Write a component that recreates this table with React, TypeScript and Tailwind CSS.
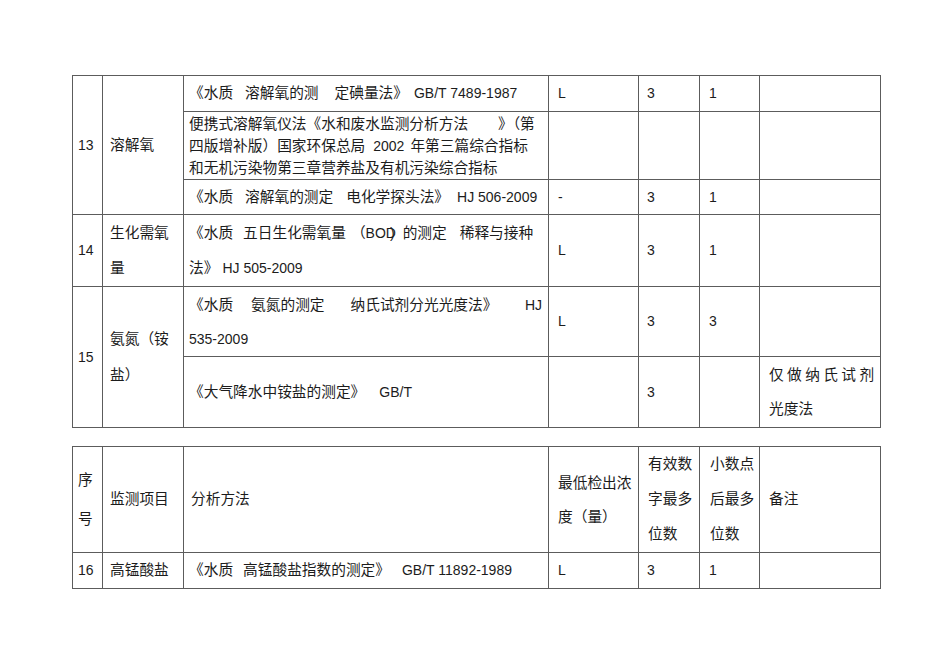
const cell = "border border-[#5c5c5c] align-middle p-0";

function Cols() {
  return (
    <colgroup>
      <col className="w-[30px]" />
      <col className="w-[81px]" />
      <col className="w-[365px]" />
      <col className="w-[90px]" />
      <col className="w-[61px]" />
      <col className="w-[60px]" />
      <col className="w-[121px]" />
    </colgroup>
  );
}

export default function App() {
  return (
    <div className="min-h-[672px] w-[950px] bg-white pl-[72px] pt-[75px] text-[14.7px] text-[#1c1c1c] font-['Liberation_Sans','Noto_Sans_CJK_SC',sans-serif]">
      <table className="table-fixed border-collapse w-[809px]">
        <Cols />
        <tbody>
          <tr className="h-[36px]">
            <td rowSpan={3} className={`${cell} pl-[5px] text-[14px]`}>13</td>
            <td rowSpan={3} className={`${cell} pl-[7px]`}>溶解氧</td>
            <td className={`${cell} pl-[5px] whitespace-nowrap`}>
              《水质<span className="ml-[12px]">溶解氧的测</span>
              <span className="ml-[16px]">定碘量法》</span>
              <span className="ml-[6px] text-[14px]">GB/T 7489-1987</span>
            </td>
            <td className={`${cell} pl-[9px] text-[14px]`}>L</td>
            <td className={`${cell} pl-[8px] text-[14px]`}>3</td>
            <td className={`${cell} pl-[9px] text-[14px]`}>1</td>
            <td className={cell}></td>
          </tr>
          <tr className="h-[68px]">
            <td className={`${cell} pl-[5px] leading-[22px] whitespace-nowrap`}>
              <div>
                便携式溶解氧仪法《水和废水监测分析方法<span className="ml-[30px]">》（第</span>
              </div>
              <div>
                四版增补版）国家环保总局<span className="ml-[8px] text-[14px]">2002</span>
                <span className="ml-[6px]">年第三篇综合指标</span>
              </div>
              <div>和无机污染物第三章营养盐及有机污染综合指标</div>
            </td>
            <td className={cell}></td>
            <td className={cell}></td>
            <td className={cell}></td>
            <td className={cell}></td>
          </tr>
          <tr className="h-[35px]">
            <td className={`${cell} pl-[5px] whitespace-nowrap`}>
              《水质<span className="ml-[12px]">溶解氧的测定</span>
              <span className="ml-[13px]">电化学探头法》</span>
              <span className="ml-[8px] text-[14px]">HJ 506-2009</span>
            </td>
            <td className={`${cell} pl-[9px] text-[14px]`}>-</td>
            <td className={`${cell} pl-[8px] text-[14px]`}>3</td>
            <td className={`${cell} pl-[9px] text-[14px]`}>1</td>
            <td className={cell}></td>
          </tr>
          <tr className="h-[72px]">
            <td className={`${cell} pl-[5px] text-[14px]`}>14</td>
            <td className={`${cell} pl-[7px] leading-[35px]`}>
              <div>生化需氧</div>
              <div>量</div>
            </td>
            <td className={`${cell} pl-[5px] leading-[35px] whitespace-nowrap`}>
              <div>
                《水质<span className="ml-[10px]">五日生化需氧量</span>
                <span className="ml-[5px]">（</span>
                <span className="text-[14px]">BOD</span>
                <span className="-ml-[6px] text-[14px]">)</span>
                <span className="ml-[8px]">的测定</span>
                <span className="ml-[13px]">稀释与接种</span>
              </div>
              <div>
                法》<span className="ml-[4px] text-[14px]">HJ 505-2009</span>
              </div>
            </td>
            <td className={`${cell} pl-[9px] text-[14px]`}>L</td>
            <td className={`${cell} pl-[8px] text-[14px]`}>3</td>
            <td className={`${cell} pl-[9px] text-[14px]`}>1</td>
            <td className={cell}></td>
          </tr>
          <tr className="h-[70px]">
            <td rowSpan={2} className={`${cell} pl-[5px] text-[14px]`}>15</td>
            <td rowSpan={2} className={`${cell} pl-[7px] leading-[36px]`}>
              <div>氨氮（铵</div>
              <div>盐）</div>
            </td>
            <td className={`${cell} pl-[5px] leading-[34px] whitespace-nowrap`}>
              <div className="flex pr-[6px]">
                <span>《水质</span>
                <span className="ml-[18px]">氨氮的测定</span>
                <span className="ml-[26px]">纳氏试剂分光光度法》</span>
                <span className="ml-auto text-[14px]">HJ</span>
              </div>
              <div className="text-[14px]">535-2009</div>
            </td>
            <td className={`${cell} pl-[9px] text-[14px]`}>L</td>
            <td className={`${cell} pl-[8px] text-[14px]`}>3</td>
            <td className={`${cell} pl-[9px] text-[14px]`}>3</td>
            <td className={cell}></td>
          </tr>
          <tr className="h-[71px]">
            <td className={`${cell} pl-[5px] whitespace-nowrap`}>
              《大气降水中铵盐的测定》<span className="ml-[14px] text-[14px]">GB/T</span>
            </td>
            <td className={cell}></td>
            <td className={`${cell} pl-[8px] text-[14px]`}>3</td>
            <td className={cell}></td>
            <td className={`${cell} pl-[9px] leading-[34px] whitespace-nowrap`}>
              <div className="tracking-[3.4px]">仅做纳氏试剂</div>
              <div>光度法</div>
            </td>
          </tr>
        </tbody>
      </table>

      <table className="table-fixed border-collapse w-[809px] mt-[18px]">
        <Cols />
        <tbody>
          <tr className="h-[106px]">
            <td className={`${cell} pl-[5px] leading-[39px]`}>
              <div>序</div>
              <div>号</div>
            </td>
            <td className={`${cell} pl-[7px]`}>监测项目</td>
            <td className={`${cell} pl-[7px]`}>分析方法</td>
            <td className={`${cell} pl-[9px] leading-[34px] whitespace-nowrap`}>
              <div>最低检出浓</div>
              <div>度（量）</div>
            </td>
            <td className={`${cell} pl-[9px] leading-[35px] whitespace-nowrap`}>
              <div>有效数</div>
              <div>字最多</div>
              <div>位数</div>
            </td>
            <td className={`${cell} pl-[10px] leading-[35px] whitespace-nowrap`}>
              <div>小数点</div>
              <div>后最多</div>
              <div>位数</div>
            </td>
            <td className={`${cell} pl-[9px]`}>备注</td>
          </tr>
          <tr className="h-[36px]">
            <td className={`${cell} pl-[5px] text-[14px]`}>16</td>
            <td className={`${cell} pl-[7px]`}>高锰酸盐</td>
            <td className={`${cell} pl-[5px] whitespace-nowrap`}>
              《水质<span className="ml-[10px]">高锰酸盐指数的测定》</span>
              <span className="ml-[12px] text-[14px]">GB/T 11892-1989</span>
            </td>
            <td className={`${cell} pl-[9px] text-[14px]`}>L</td>
            <td className={`${cell} pl-[8px] text-[14px]`}>3</td>
            <td className={`${cell} pl-[9px] text-[14px]`}>1</td>
            <td className={cell}></td>
          </tr>
        </tbody>
      </table>
    </div>
  );
}
